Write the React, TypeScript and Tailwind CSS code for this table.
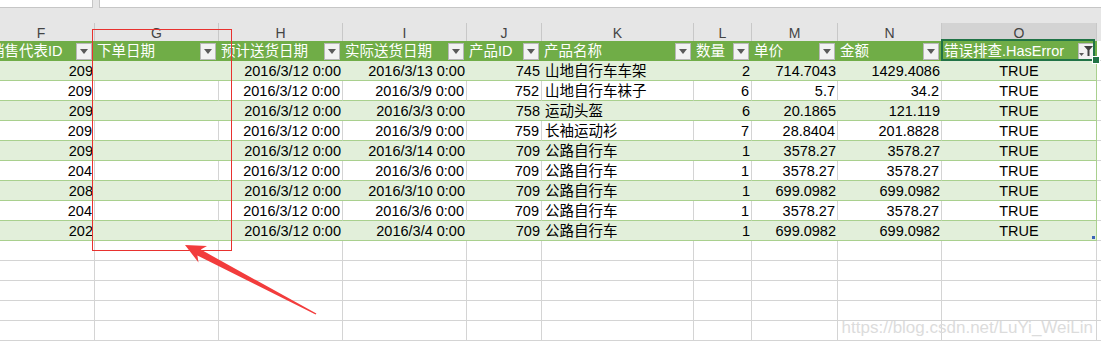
import React from 'react';

const cols = [
  { key: 'F', w: 'w-[107px]' },
  { key: 'G', w: 'w-[124px]' },
  { key: 'H', w: 'w-[124px]' },
  { key: 'I', w: 'w-[124px]' },
  { key: 'J', w: 'w-[75px]' },
  { key: 'K', w: 'w-[152px]' },
  { key: 'L', w: 'w-[58px]' },
  { key: 'M', w: 'w-[86px]' },
  { key: 'N', w: 'w-[104px]' },
  { key: 'O', w: 'w-[155px]' },
];

const headers = ['销售代表ID', '下单日期', '预计送货日期', '实际送货日期', '产品ID', '产品名称', '数量', '单价', '金额', '错误排查.HasError'];

// text alignment per column
const align = ['r', 'r', 'r', 'r', 'r', 'l', 'r', 'r', 'r', 'c'];

const rows: string[][] = [
  ['209', '', '2016/3/12 0:00', '2016/3/13 0:00', '745', '山地自行车车架', '2', '714.7043', '1429.4086', 'TRUE'],
  ['209', '', '2016/3/12 0:00', '2016/3/9 0:00', '752', '山地自行车袜子', '6', '5.7', '34.2', 'TRUE'],
  ['209', '', '2016/3/12 0:00', '2016/3/3 0:00', '758', '运动头盔', '6', '20.1865', '121.119', 'TRUE'],
  ['209', '', '2016/3/12 0:00', '2016/3/9 0:00', '759', '长袖运动衫', '7', '28.8404', '201.8828', 'TRUE'],
  ['209', '', '2016/3/12 0:00', '2016/3/14 0:00', '709', '公路自行车', '1', '3578.27', '3578.27', 'TRUE'],
  ['204', '', '2016/3/12 0:00', '2016/3/6 0:00', '709', '公路自行车', '1', '3578.27', '3578.27', 'TRUE'],
  ['208', '', '2016/3/12 0:00', '2016/3/10 0:00', '709', '公路自行车', '1', '699.0982', '699.0982', 'TRUE'],
  ['204', '', '2016/3/12 0:00', '2016/3/6 0:00', '709', '公路自行车', '1', '3578.27', '3578.27', 'TRUE'],
  ['202', '', '2016/3/12 0:00', '2016/3/4 0:00', '709', '公路自行车', '1', '699.0982', '699.0982', 'TRUE'],
];

function alignClass(a: string) {
  if (a === 'r') return 'justify-end pr-[2px]';
  if (a === 'c') return 'justify-center';
  return 'justify-start pl-[3px]';
}

function DropButton() {
  return (
    <div className="w-[16px] h-[17px] shrink-0 mr-[3px] bg-[#f2f2f2] border border-[#b8b8b8] flex items-center justify-center">
      <svg width="8" height="5" viewBox="0 0 8 5">
        <path d="M0 0h8L4 5z" fill="#5a5a5a" />
      </svg>
    </div>
  );
}

function FilterButton() {
  return (
    <div className="w-[16px] h-[17px] shrink-0 mr-[3px] bg-[#f2f2f2] border border-[#b8b8b8] flex items-end justify-center pb-[2px]">
      <svg width="14" height="12" viewBox="0 0 14 12">
        <path d="M0 8h5L2.5 11z" fill="#5a5a5a" />
        <path d="M5 1h9L10.5 5v6h-2V5z" fill="#3f3f3f" />
      </svg>
    </div>
  );
}

export default function App() {
  return (
    <div className="relative w-[1101px] h-[346px] overflow-hidden bg-white font-['Liberation_Sans','Noto_Sans_CJK_SC',sans-serif] text-black">
      {/* name box + formula bar edge */}
      <div className="flex h-[8px] bg-[#e6e6e6]">
        <div className="w-[93px] bg-white border-b border-r border-[#c6c6c6]" />
        <div className="w-[6px]" />
        <div className="flex-1 bg-white border-b border-l border-[#c6c6c6]" />
      </div>
      <div className="h-[15px] bg-[#e6e6e6]" />

      {/* column letters */}
      <div className="flex h-[18px] -ml-[12px] bg-[#e6e6e6]">
        {cols.map((c) => (
          <div
            key={c.key}
            className={`${c.w} shrink-0 border-r border-[#c8c8c8] flex items-center justify-center pt-[1px] text-[14px] text-[#444] leading-none ${c.key === 'O' ? 'bg-[#d3d3d3]' : ''}`}
          >
            {c.key}
          </div>
        ))}
        <div className="flex-1" />
      </div>

      {/* table header */}
      <div className="flex h-[20px] -ml-[12px]">
        {cols.map((c, i) => (
          <div key={c.key} className={`${c.w} shrink-0 bg-[#70ad47] flex items-center justify-between`}>
            <span className="pl-[2px] pt-[1px] text-[14.5px] text-white whitespace-nowrap leading-none">{headers[i]}</span>
            {c.key === 'O' ? <FilterButton /> : <DropButton />}
          </div>
        ))}
        <div className="flex-1 bg-white border-b border-[#d4d4d4]" />
      </div>

      {/* data rows */}
      {rows.map((r, ri) => {
        const green = ri % 2 === 0;
        return (
          <div key={ri} className="flex h-[20px] -ml-[12px]">
            {cols.map((c, i) => (
              <div
                key={c.key}
                className={`${c.w} shrink-0 flex items-center pt-[1px] border-b border-[#a9d08e] text-[14.5px] leading-none whitespace-nowrap ${alignClass(align[i])} ${
                  green ? 'bg-[#e2efda]' : 'bg-white'
                } ${c.key === 'O' ? 'border-r border-r-[#a9d08e]' : green ? '' : 'border-r border-r-[#d4d4d4]'}`}
              >
                {r[i]}
              </div>
            ))}
            <div className="flex-1 border-b border-[#d4d4d4]" />
          </div>
        );
      })}

      {/* empty rows */}
      {[0, 1, 2, 3, 4].map((k) => (
        <div key={k} className="flex h-[20px] -ml-[12px]">
          {cols.map((c) => (
            <div key={c.key} className={`${c.w} shrink-0 border-r border-b border-[#d4d4d4]`} />
          ))}
          <div className="flex-1 border-b border-[#d4d4d4]" />
        </div>
      ))}

      {/* selected cell O header */}
      <div className="absolute left-[941px] top-[39px] w-[154px] h-[22px] border-2 border-[#217346]" />
      <div className="absolute left-[1092px] top-[56px] w-[8px] h-[8px] bg-[#217346] border border-white" />

      {/* table resize corner */}
      <div className="absolute left-[1092px] top-[236px] w-[3px] h-[3px] bg-[#3b64b8]" />

      {/* red annotation box */}
      <div className="absolute left-[92px] top-[29px] w-[140px] h-[222px] border border-[#e8322f]" />

      {/* annotation arrow */}
      <svg className="absolute left-0 top-0 pointer-events-none" width="1101" height="346">
        <polygon
          points="185,245 207,246 200.8,249.6 316.4,313.6 315.6,314.6 197.4,255.6 198.5,262.5"
          fill="#f23c3c"
        />
      </svg>

      {/* watermark */}
      <div className="absolute right-[8px] top-[319px] text-[17px] leading-none text-[#dcdcdc] whitespace-nowrap">
        https://blog.csdn.net/LuYi_WeiLin
      </div>
    </div>
  );
}
